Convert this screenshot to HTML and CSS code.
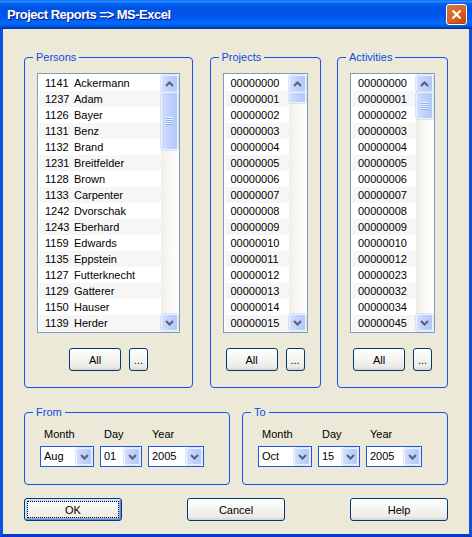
FILE: index.html
```html
<!DOCTYPE html>
<html lang="en">
<head>
    <meta charset="UTF-8">
    <title>Project Reports => MS-Excel</title>
    <link rel="stylesheet" href="styles.css">
</head>
<body>
<div class="window">
    <div class="titlebar">
        <span class="title">Project Reports =&gt; MS-Excel</span>
        <button class="close" title="Close">
            <svg width="13" height="13" viewBox="0 0 13 13"><path d="M2.5 2.5 L10.5 10.5 M10.5 2.5 L2.5 10.5" stroke="#fff" stroke-width="2.2" fill="none"/></svg>
        </button>
    </div>

    <div class="client">
        <div class="lists">
            <fieldset class="group persons">
                <legend>Persons</legend>
                <div class="body">
                    <div class="listbox">
                        <ul class="items">
                            <li><span class="id">1141</span>Ackermann</li>
                            <li><span class="id">1237</span>Adam</li>
                            <li><span class="id">1126</span>Bayer</li>
                            <li><span class="id">1131</span>Benz</li>
                            <li><span class="id">1132</span>Brand</li>
                            <li><span class="id">1231</span>Breitfelder</li>
                            <li><span class="id">1128</span>Brown</li>
                            <li><span class="id">1133</span>Carpenter</li>
                            <li><span class="id">1242</span>Dvorschak</li>
                            <li><span class="id">1243</span>Eberhard</li>
                            <li><span class="id">1159</span>Edwards</li>
                            <li><span class="id">1135</span>Eppstein</li>
                            <li><span class="id">1127</span>Futterknecht</li>
                            <li><span class="id">1129</span>Gatterer</li>
                            <li><span class="id">1150</span>Hauser</li>
                            <li><span class="id">1139</span>Herder</li>
                        </ul>
                        <div class="vscroll">
                            <div class="sb-btn"><svg width="9" height="6" viewBox="0 0 9 6"><path d="M1 5 L4.5 1.5 L8 5" stroke="#4d6185" stroke-width="2" fill="none"/></svg></div>
                            <div class="sb-track"><div class="sb-thumb grip" style="height: 58px"></div></div>
                            <div class="sb-btn"><svg width="9" height="6" viewBox="0 0 9 6"><path d="M1 1 L4.5 4.5 L8 1" stroke="#4d6185" stroke-width="2" fill="none"/></svg></div>
                        </div>
                    </div>
                    <div class="btnrow">
                        <button class="btn all">All</button>
                        <button class="btn more">...</button>
                    </div>
                </div>
            </fieldset>

            <fieldset class="group projects">
                <legend>Projects</legend>
                <div class="body">
                    <div class="listbox">
                        <ul class="items">
                            <li>00000000</li>
                            <li>00000001</li>
                            <li>00000002</li>
                            <li>00000003</li>
                            <li>00000004</li>
                            <li>00000005</li>
                            <li>00000006</li>
                            <li>00000007</li>
                            <li>00000008</li>
                            <li>00000009</li>
                            <li>00000010</li>
                            <li>00000011</li>
                            <li>00000012</li>
                            <li>00000013</li>
                            <li>00000014</li>
                            <li>00000015</li>
                        </ul>
                        <div class="vscroll">
                            <div class="sb-btn"><svg width="9" height="6" viewBox="0 0 9 6"><path d="M1 5 L4.5 1.5 L8 5" stroke="#4d6185" stroke-width="2" fill="none"/></svg></div>
                            <div class="sb-track"><div class="sb-thumb" style="height: 11px"></div></div>
                            <div class="sb-btn"><svg width="9" height="6" viewBox="0 0 9 6"><path d="M1 1 L4.5 4.5 L8 1" stroke="#4d6185" stroke-width="2" fill="none"/></svg></div>
                        </div>
                    </div>
                    <div class="btnrow">
                        <button class="btn all">All</button>
                        <button class="btn more">...</button>
                    </div>
                </div>
            </fieldset>

            <fieldset class="group activities">
                <legend>Activities</legend>
                <div class="body">
                    <div class="listbox">
                        <ul class="items">
                            <li>00000000</li>
                            <li>00000001</li>
                            <li>00000002</li>
                            <li>00000003</li>
                            <li>00000004</li>
                            <li>00000005</li>
                            <li>00000006</li>
                            <li>00000007</li>
                            <li>00000008</li>
                            <li>00000009</li>
                            <li>00000010</li>
                            <li>00000012</li>
                            <li>00000023</li>
                            <li>00000032</li>
                            <li>00000034</li>
                            <li>00000045</li>
                        </ul>
                        <div class="vscroll">
                            <div class="sb-btn"><svg width="9" height="6" viewBox="0 0 9 6"><path d="M1 5 L4.5 1.5 L8 5" stroke="#4d6185" stroke-width="2" fill="none"/></svg></div>
                            <div class="sb-track"><div class="sb-thumb grip" style="height: 27px"></div></div>
                            <div class="sb-btn"><svg width="9" height="6" viewBox="0 0 9 6"><path d="M1 1 L4.5 4.5 L8 1" stroke="#4d6185" stroke-width="2" fill="none"/></svg></div>
                        </div>
                    </div>
                    <div class="btnrow">
                        <button class="btn all">All</button>
                        <button class="btn more">...</button>
                    </div>
                </div>
            </fieldset>
        </div>

        <div class="dates">
            <fieldset class="group date">
                <legend>From</legend>
                <div class="body fields">
                    <div class="field">
                        <span class="label">Month</span>
                        <div class="combo month"><span class="value">Aug</span><span class="drop"><svg width="9" height="6" viewBox="0 0 9 6"><path d="M1 1 L4.5 4.5 L8 1" stroke="#4d6185" stroke-width="2" fill="none"/></svg></span></div>
                    </div>
                    <div class="field">
                        <span class="label">Day</span>
                        <div class="combo day"><span class="value">01</span><span class="drop"><svg width="9" height="6" viewBox="0 0 9 6"><path d="M1 1 L4.5 4.5 L8 1" stroke="#4d6185" stroke-width="2" fill="none"/></svg></span></div>
                    </div>
                    <div class="field">
                        <span class="label">Year</span>
                        <div class="combo year"><span class="value">2005</span><span class="drop"><svg width="9" height="6" viewBox="0 0 9 6"><path d="M1 1 L4.5 4.5 L8 1" stroke="#4d6185" stroke-width="2" fill="none"/></svg></span></div>
                    </div>
                </div>
            </fieldset>

            <fieldset class="group date">
                <legend>To</legend>
                <div class="body fields">
                    <div class="field">
                        <span class="label">Month</span>
                        <div class="combo month"><span class="value">Oct</span><span class="drop"><svg width="9" height="6" viewBox="0 0 9 6"><path d="M1 1 L4.5 4.5 L8 1" stroke="#4d6185" stroke-width="2" fill="none"/></svg></span></div>
                    </div>
                    <div class="field">
                        <span class="label">Day</span>
                        <div class="combo day"><span class="value">15</span><span class="drop"><svg width="9" height="6" viewBox="0 0 9 6"><path d="M1 1 L4.5 4.5 L8 1" stroke="#4d6185" stroke-width="2" fill="none"/></svg></span></div>
                    </div>
                    <div class="field">
                        <span class="label">Year</span>
                        <div class="combo year"><span class="value">2005</span><span class="drop"><svg width="9" height="6" viewBox="0 0 9 6"><path d="M1 1 L4.5 4.5 L8 1" stroke="#4d6185" stroke-width="2" fill="none"/></svg></span></div>
                    </div>
                </div>
            </fieldset>
        </div>

        <div class="actions">
            <button class="btn wide default">OK</button>
            <button class="btn wide">Cancel</button>
            <button class="btn wide">Help</button>
        </div>
    </div>
</div>
</body>
</html>
```

FILE: styles.css
```css
* {
    box-sizing: border-box;
}

body {
    margin: 0;
    background: #fff;
    font-family: "Liberation Sans", Arial, sans-serif;
    font-size: 11px;
    color: #000;
}

.window {
    width: 472px;
    height: 537px;
    display: flex;
    flex-direction: column;
}

/* Title bar (Luna blue) */
.titlebar {
    flex: none;
    height: 29px;
    display: flex;
    align-items: center;
    justify-content: space-between;
    padding: 0 5px 0 7px;
    background: linear-gradient(180deg,
        #0058ee 0%, #3593ff 4%, #288eff 6%, #127dff 8%, #036ffc 10%,
        #0262ee 14%, #0057e5 20%, #0054e3 24%, #0055eb 56%, #005bf5 66%,
        #026afe 76%, #0062ef 86%, #0052d6 92%, #0040ab 96%, #003092 100%);
}

.title {
    color: #fff;
    font-weight: bold;
    font-size: 13px;
    letter-spacing: -0.5px;
    text-shadow: 1px 1px 0 #0a1883;
}

.close {
    width: 21px;
    height: 21px;
    padding: 0;
    border: 1px solid #fff;
    border-radius: 3px;
    background: radial-gradient(circle at 90% 90%, #cc4600 0%, #dc6527 55%, #cd7546 90%), #e05a2b;
    display: flex;
    align-items: center;
    justify-content: center;
    box-shadow: inset 0 -1px 1px #b33a12;
}

/* Client area */
.client {
    flex: 1;
    display: flex;
    flex-direction: column;
    background: #ece9d8;
    border: 3px solid #0b50e0;
    border-top: 0;
    border-bottom-color: #0838cf;
    padding: 21px 21px 0;
}

.group {
    margin: 0;
    padding: 9px 0 16px;
    min-width: 0;
    border: 1px solid #1552e6;
    border-radius: 4px;
}

.group legend {
    margin-left: 8px;
    padding: 0 3px;
    line-height: 14px;
    color: #0b4ce0;
}

.lists {
    display: flex;
    justify-content: space-between;
}

.persons { width: 169px; }
.projects, .activities { width: 111px; }

.lists .body {
    padding: 0 12px 0 12px;
}

.listbox {
    display: flex;
    height: 260px;
    padding: 1px;
    border: 1px solid #7f9db9;
    background: #fff;
}

.items {
    flex: 1;
    margin: 0;
    padding: 0;
    list-style: none;
    overflow: hidden;
}

.items li {
    height: 16px;
    line-height: 16px;
    padding-left: 6px;
    white-space: nowrap;
}

.items li:nth-child(even) {
    background: #f6f6f6;
}

.id {
    display: inline-block;
    width: 29px;
}

/* XP scrollbar */
.vscroll {
    width: 17px;
    flex: none;
    display: flex;
    flex-direction: column;
    background: linear-gradient(90deg, #f0eee6, #fbfaf7 60%, #fefefe);
}

.sb-btn, .sb-thumb, .drop {
    border: 1px solid #eef2fd;
    border-radius: 2px;
    background: linear-gradient(90deg, #d2defd 0%, #c0d2fb 45%, #b3c8f7 100%);
    box-shadow: 0 0 0 0.5px #b4c8f3;
}

.sb-btn {
    height: 17px;
    flex: none;
    display: flex;
    align-items: center;
    justify-content: center;
}

.sb-track {
    flex: 1;
}

.sb-thumb {
    position: relative;
}

.sb-thumb.grip::after {
    content: '';
    position: absolute;
    left: 4px;
    right: 4px;
    top: 50%;
    height: 8px;
    margin-top: -4px;
    background: repeating-linear-gradient(180deg, #eef4fe 0, #eef4fe 1px, #8caef3 1px, #8caef3 2px);
}

.btnrow {
    display: flex;
    justify-content: center;
    gap: 8px;
    margin-top: 15px;
}

/* XP push buttons */
.btn {
    height: 23px;
    padding: 0;
    font-family: inherit;
    font-size: 11px;
    color: #000;
    border: 1px solid #003c74;
    border-radius: 3px;
    background: linear-gradient(180deg, #fff 0%, #f5f5f1 45%, #ecebe5 85%, #d8d2c6 100%);
}

.btn.all { width: 52px; }
.btn.more { width: 19px; }
.btn.wide { width: 98px; }

.btn.default {
    box-shadow: inset 1px 1px 0 #cee7ff, inset -1px -1px 0 #6982ee, inset 2px 2px 0 #bcd4f6, inset -2px -2px 0 #89ade4;
    outline: 1px dotted #000;
    outline-offset: -4px;
}

/* Date ranges */
.dates {
    display: flex;
    justify-content: space-between;
    margin-top: 17px;
}

.date {
    width: 206px;
    padding: 8px 0 17px;
}

.fields {
    display: flex;
    gap: 6px;
    padding: 0 15px;
}

.field {
    display: flex;
    flex-direction: column;
    gap: 5px;
}

.label {
    line-height: 14px;
    padding-left: 4px;
}

.combo {
    display: flex;
    height: 21px;
    padding: 1px;
    border: 1px solid #2058e0;
    background: #fff;
}

.combo.month { width: 54px; }
.combo.day { width: 42px; }
.combo.year { width: 56px; }

.combo .value {
    flex: 1;
    padding-left: 2px;
    line-height: 17px;
}

.drop {
    width: 16px;
    flex: none;
    display: flex;
    align-items: center;
    justify-content: center;
}

.actions {
    display: flex;
    justify-content: space-between;
    margin-top: 13px;
}
```
